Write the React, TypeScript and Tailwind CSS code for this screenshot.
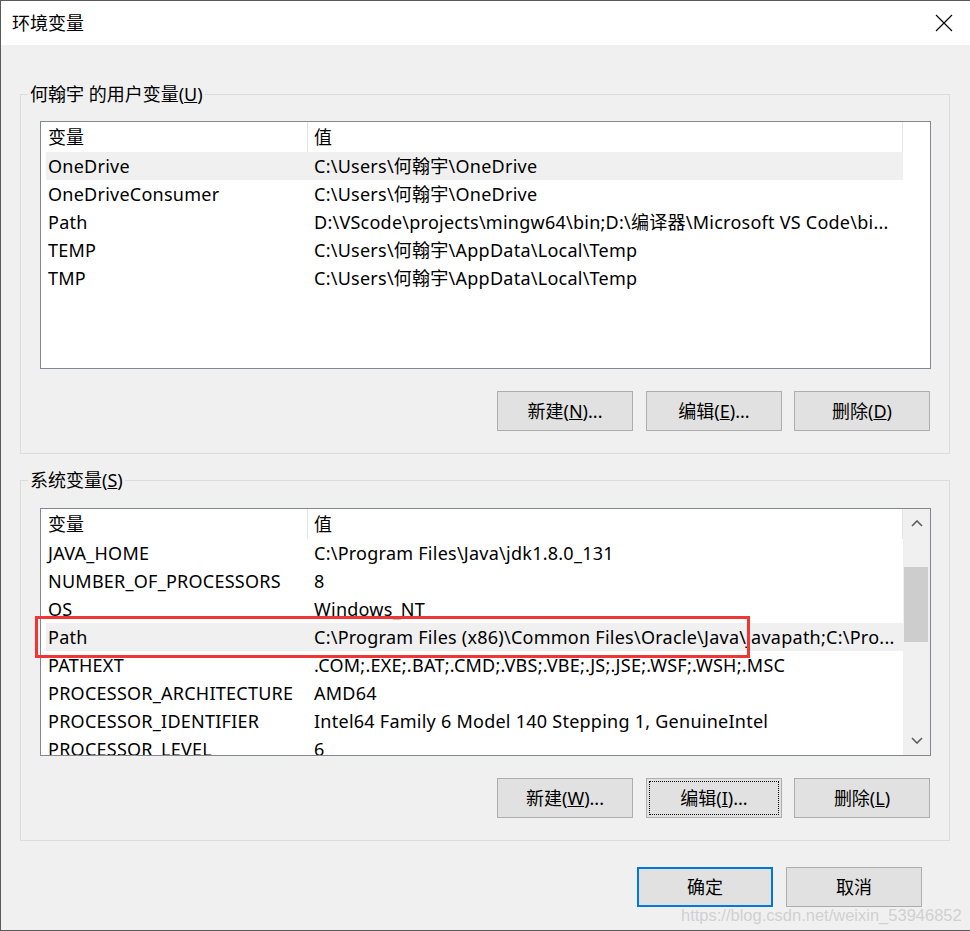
import React from 'react';

type Row = { name: string; value: string; hover?: boolean };

const userVars: Row[] = [
  { name: 'OneDrive', value: 'C:\\Users\\何翰宇\\OneDrive', hover: true },
  { name: 'OneDriveConsumer', value: 'C:\\Users\\何翰宇\\OneDrive' },
  { name: 'Path', value: 'D:\\VScode\\projects\\mingw64\\bin;D:\\编译器\\Microsoft VS Code\\bi...' },
  { name: 'TEMP', value: 'C:\\Users\\何翰宇\\AppData\\Local\\Temp' },
  { name: 'TMP', value: 'C:\\Users\\何翰宇\\AppData\\Local\\Temp' },
];

const systemVars: Row[] = [
  { name: 'JAVA_HOME', value: 'C:\\Program Files\\Java\\jdk1.8.0_131' },
  { name: 'NUMBER_OF_PROCESSORS', value: '8' },
  { name: 'OS', value: 'Windows_NT' },
  { name: 'Path', value: 'C:\\Program Files (x86)\\Common Files\\Oracle\\Java\\javapath;C:\\Pro...', hover: true },
  { name: 'PATHEXT', value: '.COM;.EXE;.BAT;.CMD;.VBS;.VBE;.JS;.JSE;.WSF;.WSH;.MSC' },
  { name: 'PROCESSOR_ARCHITECTURE', value: 'AMD64' },
  { name: 'PROCESSOR_IDENTIFIER', value: 'Intel64 Family 6 Model 140 Stepping 1, GenuineIntel' },
  { name: 'PROCESSOR_LEVEL', value: '6' },
];

function Chevron({ up }: { up?: boolean }) {
  return (
    <svg width="12" height="8" viewBox="0 0 12 8">
      <polyline
        points={up ? '1,7 6,2 11,7' : '1,1 6,6 11,1'}
        fill="none"
        stroke="#606060"
        strokeWidth="1.6"
      />
    </svg>
  );
}

function Scrollbar() {
  return (
    <div className="w-[27px] bg-[#f0f0f0] flex flex-col">
      <div className="h-[28px] flex items-center justify-center">
        <Chevron up />
      </div>
      <div className="flex-1">
        <div className="mt-[30px] ml-[1px] w-[24px] h-[75px] bg-[#cdcdcd]" />
      </div>
      <div className="h-[28px] flex items-center justify-center">
        <Chevron />
      </div>
    </div>
  );
}

function VarList({ rows, scroll }: { rows: Row[]; scroll?: boolean }) {
  return (
    <div className="h-[248px] border border-[#828790] bg-white flex overflow-hidden">
      <div className="w-[862px] shrink-0">
        <div className="h-[30px] flex">
          <div className="w-[267px] pl-[7px] border-r border-[#e5e5e5] flex items-center">变量</div>
          <div className="w-[595px] pl-[6px] border-r border-[#e5e5e5] flex items-center">值</div>
        </div>
        {rows.map((r, i) => (
          <div
            key={i}
            className={`ml-[5px] h-[28px] flex items-center pl-[2px] whitespace-nowrap tracking-[0.25px] ${r.hover ? 'bg-[#f0f0f0]' : ''}`}
          >
            <div className="w-[266px] shrink-0">{r.name}</div>
            <div className="flex-1 overflow-hidden">{r.value}</div>
          </div>
        ))}
      </div>
      {scroll ? <Scrollbar /> : <div className="flex-1" />}
    </div>
  );
}

function Btn({ children, focus, primary, className = '' }: { children: React.ReactNode; focus?: boolean; primary?: boolean; className?: string }) {
  return (
    <button
      className={`relative w-[136px] h-[40px] bg-[#e1e1e1] flex items-center justify-center ${
        primary ? 'border-2 border-[#0078d7]' : 'border border-[#adadad]'
      } ${className}`}
    >
      {focus && <span className="absolute inset-[2px] border border-dotted border-black" />}
      <span className="leading-none">{children}</span>
    </button>
  );
}

function GroupBox({ label, children, className = '' }: { label: React.ReactNode; children: React.ReactNode; className?: string }) {
  return (
    <div className={`relative border border-[#dcdcdc] pl-[19px] pr-[18px] pb-[22px] ${className}`}>
      <div className="absolute left-[7px] top-[-14px] px-[2px] bg-[#f0f0f0] leading-[26px]">{label}</div>
      {children}
    </div>
  );
}

export default function App() {
  return (
    <div className="relative w-[970px] h-[931px] bg-[#f0f0f0] overflow-hidden border-l border-b border-t border-[#5a5a5a] text-[18px] text-black font-['Noto_Sans','Noto_Sans_CJK_SC',sans-serif]">
      <div className="h-[44px] bg-white flex items-center justify-between pl-[11px] pr-[17px]">
        <span>环境变量</span>
        <svg width="18" height="18" viewBox="0 0 18 18">
          <path d="M1 1 L17 17 M17 1 L1 17" stroke="#000" strokeWidth="1.1" />
        </svg>
      </div>

      <div className="pl-[19px] pr-[20px] pt-[49px]">
        <GroupBox
          className="pt-[26px]"
          label={
            <>
              何翰宇 的用户变量(<u>U</u>)
            </>
          }
        >
          <VarList rows={userVars} />
          <div className="flex justify-end gap-[12px] mt-[22px] pr-[1px]">
            <Btn className="mr-[1px]">
              新建(<u>N</u>)...
            </Btn>
            <Btn>
              编辑(<u>E</u>)...
            </Btn>
            <Btn>
              删除(<u>D</u>)
            </Btn>
          </div>
        </GroupBox>

        <GroupBox
          className="mt-[26px] pt-[27px]"
          label={
            <>
              系统变量(<u>S</u>)
            </>
          }
        >
          <VarList rows={systemVars} scroll />
          <div className="flex justify-end gap-[12px] mt-[22px] pr-[1px]">
            <Btn className="mr-[1px]">
              新建(<u>W</u>)...
            </Btn>
            <Btn focus>
              编辑(<u>I</u>)...
            </Btn>
            <Btn>
              删除(<u>L</u>)
            </Btn>
          </div>
        </GroupBox>

        <div className="flex justify-end gap-[13px] mt-[26px] pr-[28px]">
          <Btn primary>确定</Btn>
          <Btn>取消</Btn>
        </div>
      </div>

      <div className="absolute left-[34px] top-[615px] w-[715px] h-[42px] border-[3px] border-[#f03535]" />
      <div className="absolute left-[680px] top-[902px] text-[16.5px] text-[#d0d0d0] font-['Liberation_Sans',sans-serif]">
        https://blog.csdn.net/weixin_53946852
      </div>
    </div>
  );
}
